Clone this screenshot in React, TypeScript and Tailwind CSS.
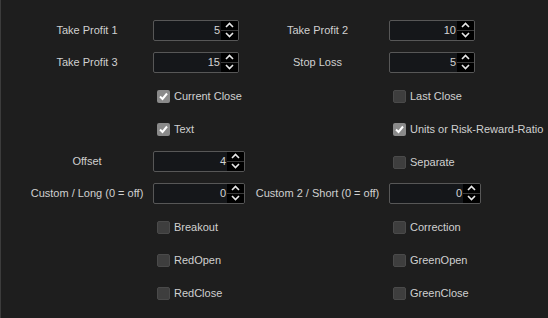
import type { ReactNode } from "react"

type Field = { label: string; value: number; wide?: boolean }

function Spinner() {
  return (
    <div className="flex w-[17px] flex-col bg-black">
      <div className="flex flex-1 items-center justify-center border-b border-[#3a3a3a]">
        <svg width="9" height="6" viewBox="0 0 9 6" fill="none">
          <path d="M1 5L4.5 1.5L8 5" stroke="#e8e8e8" strokeWidth="1.6" />
        </svg>
      </div>
      <div className="flex flex-1 items-center justify-center">
        <svg width="9" height="6" viewBox="0 0 9 6" fill="none">
          <path d="M1 1L4.5 4.5L8 1" stroke="#e8e8e8" strokeWidth="1.6" />
        </svg>
      </div>
    </div>
  )
}

function NumberInput({ value, wide }: { value: number; wide?: boolean }) {
  return (
    <div
      className={`flex h-[21px] overflow-hidden rounded-[2px] border border-[#575757] bg-[#15171a] ${
        wide ? "w-[92px]" : "w-[86px]"
      }`}
    >
      <div className="flex flex-1 items-center justify-end pr-[1px] text-[#d4d4d4]">{value}</div>
      <Spinner />
    </div>
  )
}

function Check({ label, checked }: { label: string; checked?: boolean }) {
  return (
    <div className="flex items-center gap-[4px] pt-[2px]">
      <div
        className={`flex h-[13px] w-[13px] items-center justify-center rounded-[2px] ${
          checked ? "bg-[#8a8a8a]" : "bg-[#3e3e3e] border border-[#4a4a4a]"
        }`}
      >
        {checked && (
          <svg width="11" height="11" viewBox="0 0 11 11" fill="none">
            <path d="M2 5.5L4.5 8L9 2.5" stroke="#ffffff" strokeWidth="2" />
          </svg>
        )}
      </div>
      <span>{label}</span>
    </div>
  )
}

function Row({ h, children }: { h: string; children: ReactNode }) {
  return <div className={`grid grid-cols-[132px_93px_143px_1fr] items-center ${h}`}>{children}</div>
}

function Label({ text }: { text?: string }) {
  return <div className="text-center">{text}</div>
}

function InputRow({ h, left, right }: { h: string; left: Field; right: Field }) {
  return (
    <Row h={h}>
      <Label text={left.label} />
      <NumberInput value={left.value} wide={left.wide} />
      <Label text={right.label} />
      <NumberInput value={right.value} wide={right.wide} />
    </Row>
  )
}

function CheckRow({
  h,
  left,
  right,
}: {
  h: string
  left: { label: string; checked?: boolean }
  right: { label: string; checked?: boolean }
}) {
  return (
    <Row h={h}>
      <div />
      <div className="pl-[4px]">
        <Check {...left} />
      </div>
      <div />
      <div className="pl-[4px]">
        <Check {...right} />
      </div>
    </Row>
  )
}

export default function App() {
  return (
    <div
      className="h-[318px] w-[548px] border-l border-[#3c3c3c] bg-[#1e1e1e] pl-[20px] pt-[14px] text-[11px] text-[#d0d0d0]"
      style={{ fontFamily: '"Liberation Sans", Arial, sans-serif' }}
    >
      <InputRow h="h-[32px]" left={{ label: "Take Profit 1", value: 5 }} right={{ label: "Take Profit 2", value: 10 }} />
      <InputRow h="h-[32px]" left={{ label: "Take Profit 3", value: 15 }} right={{ label: "Stop Loss", value: 5 }} />
      <CheckRow h="h-[34px]" left={{ label: "Current Close", checked: true }} right={{ label: "Last Close" }} />
      <CheckRow h="h-[33px]" left={{ label: "Text", checked: true }} right={{ label: "Units or Risk-Reward-Ratio", checked: true }} />
      <Row h="h-[32px]">
        <Label text="Offset" />
        <NumberInput value={4} wide />
        <div />
        <div className="pl-[4px]">
          <Check label="Separate" />
        </div>
      </Row>
      <InputRow
        h="h-[32px]"
        left={{ label: "Custom / Long (0 = off)", value: 0, wide: true }}
        right={{ label: "Custom 2 / Short (0 = off)", value: 0, wide: true }}
      />
      <CheckRow h="h-[34px]" left={{ label: "Breakout" }} right={{ label: "Correction" }} />
      <CheckRow h="h-[33px]" left={{ label: "RedOpen" }} right={{ label: "GreenOpen" }} />
      <CheckRow h="h-[33px]" left={{ label: "RedClose" }} right={{ label: "GreenClose" }} />
    </div>
  )
}
